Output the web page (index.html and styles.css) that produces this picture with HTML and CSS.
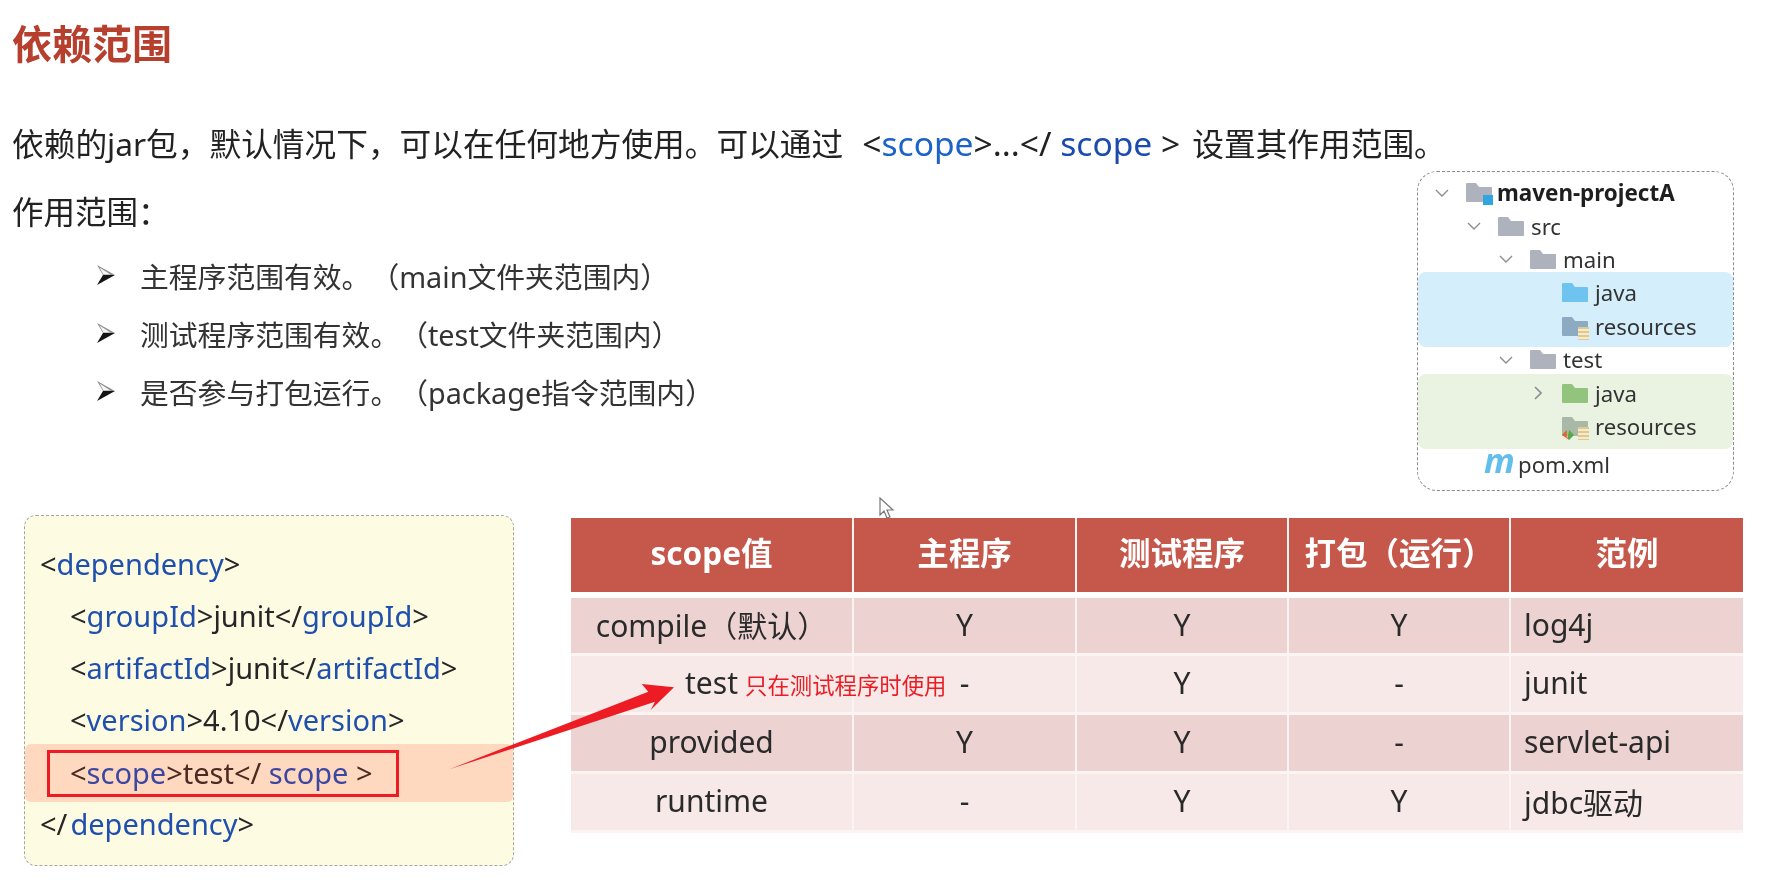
FILE: index.html
```html
<!DOCTYPE html>
<html lang="zh-CN">
<head>
<meta charset="utf-8">
<title>依赖范围</title>
<link rel="stylesheet" href="styles.css">
</head>
<body>
<svg class="defs" width="0" height="0" aria-hidden="true">
  <symbol id="folder" viewBox="0 0 26 19"><path d="M0 1a1 1 0 0 1 1-1h9l3 4h12a1 1 0 0 1 1 1v13a1 1 0 0 1-1 1H1a1 1 0 0 1-1-1z"/></symbol>
  <symbol id="chev-down" viewBox="0 0 14 8"><path d="M1 1l6 6 6-6" fill="none" stroke="#8a8d92" stroke-width="1.4"/></symbol>
  <symbol id="chev-right" viewBox="0 0 8 14"><path d="M1 1l6 6-6 6" fill="none" stroke="#8a8d92" stroke-width="1.6"/></symbol>
  <symbol id="bullet" viewBox="0 0 18 20"><path d="M0 0l18 10H6z" fill="#8f8f8f"/><path d="M2.500 2.500l11 7H6.500z" fill="#f6f6f6"/><path d="M0 20l18-10H6z" fill="#141414"/></symbol>
</svg>
<main class="slide">
  <h1 class="title">依赖范围</h1>
  <p class="intro">依赖的jar包，默认情况下，可以在任何地方使用。可以通过<span class="latin">&lt;<span class="kw">scope</span>&gt;...&lt;/ <span class="kw2">scope</span> &gt;</span>设置其作用范围。</p>

  <section class="top">
    <div class="scope-text">
      <p class="scope-label">作用范围：</p>
      <ul class="scope-list">
        <li><svg class="bullet"><use href="#bullet"/></svg><span>主程序范围有效。（main文件夹范围内）</span></li>
        <li><svg class="bullet"><use href="#bullet"/></svg><span>测试程序范围有效。（test文件夹范围内）</span></li>
        <li><svg class="bullet"><use href="#bullet"/></svg><span>是否参与打包运行。（package指令范围内）</span></li>
      </ul>
    </div>
    <div class="tree">
      <div class="row lv0"><svg class="chev"><use href="#chev-down"/></svg>
        <span class="icon-wrap"><svg class="folder f-gray"><use href="#folder"/></svg><i class="mod-badge"></i></span><b class="root-name">maven-projectA</b></div>
      <div class="row lv1"><svg class="chev"><use href="#chev-down"/></svg><svg class="folder f-gray"><use href="#folder"/></svg><span>src</span></div>
      <div class="row lv2"><svg class="chev"><use href="#chev-down"/></svg><svg class="folder f-gray"><use href="#folder"/></svg><span>main</span></div>
      <div class="band band-blue">
        <div class="row lv3"><span class="chev"></span><svg class="folder f-blue"><use href="#folder"/></svg><span>java</span></div>
        <div class="row lv3"><span class="chev"></span><span class="icon-wrap"><svg class="folder f-slate"><use href="#folder"/></svg><i class="res-badge"></i></span><span>resources</span></div>
      </div>
      <div class="row lv2"><svg class="chev"><use href="#chev-down"/></svg><svg class="folder f-gray"><use href="#folder"/></svg><span>test</span></div>
      <div class="band band-green">
        <div class="row lv3"><svg class="chev chev-r"><use href="#chev-right"/></svg><svg class="folder f-green"><use href="#folder"/></svg><span>java</span></div>
        <div class="row lv3"><span class="chev"></span><span class="icon-wrap"><svg class="folder f-sage"><use href="#folder"/></svg><i class="res-badge"></i><i class="code-badge"></i></span><span>resources</span></div>
      </div>
      <div class="row pom"><i class="pom-m">m</i><span>pom.xml</span></div>
    </div>
  </section>

  <section class="bottom">
    <div class="code">
      <div class="line">&lt;<span class="tag">dependency</span>&gt;</div>
      <div class="line ind">&lt;<span class="tag">groupId</span>&gt;junit&lt;/<span class="tag">groupId</span>&gt;</div>
      <div class="line ind">&lt;<span class="tag">artifactId</span>&gt;junit&lt;/<span class="tag">artifactId</span>&gt;</div>
      <div class="line ind">&lt;<span class="tag">version</span>&gt;4.10&lt;/<span class="tag">version</span>&gt;</div>
      <div class="hl"><div class="hl-box">&lt;<span class="hl-tag">scope</span>&gt;test&lt;/ <span class="hl-tag">scope</span> &gt;</div></div>
      <div class="line">&lt;/<span class="tag tag-close">dependency</span>&gt;</div>
    </div>

    <table class="scopes">
      <colgroup><col class="c1"><col class="c2"><col class="c3"><col class="c4"><col class="c5"></colgroup>
      <thead><tr><th>scope值</th><th>主程序</th><th>测试程序</th><th>打包（运行）</th><th>范例</th></tr></thead>
      <tbody>
        <tr><td>compile（默认）</td><td>Y</td><td>Y</td><td>Y</td><td class="ex">log4j</td></tr>
        <tr><td class="note-cell">test<span class="note">只在测试程序时使用</span></td><td>-</td><td>Y</td><td>-</td><td class="ex">junit</td></tr>
        <tr><td>provided</td><td>Y</td><td>Y</td><td>-</td><td class="ex">servlet-api</td></tr>
        <tr><td>runtime</td><td>-</td><td>Y</td><td>Y</td><td class="ex">jdbc驱动</td></tr>
      </tbody>
    </table>
  </section>

  <svg class="arrow" viewBox="0 0 240 100" aria-hidden="true"><polygon points="1.300,87.300 200.300,9.700 193.700,2 226,5.300 202.700,28 207,19.700"/></svg>
  <svg class="cursor" viewBox="0 0 16 24" aria-hidden="true"><path d="M1 1v17l4-4 3 7 3-1-3-7h6z" fill="#fff" stroke="#777" stroke-width="1.2"/></svg>
</main>
</body>
</html>
```
FILE: styles.css
```css
* { box-sizing: border-box; }
html, body { margin: 0; padding: 0; background: #fff; }
.defs { position: absolute; }
.slide {
  position: relative;
  width: 1767px;
  height: 880px;
  overflow: hidden;
  padding: 24px 33px 0 12px;
  background: #fff;
  color: #222;
  font-family: "Noto Sans", "Noto Sans CJK SC", sans-serif;
  text-spacing-trim: space-all;
  filter: blur(0.5px);
}
.title {
  margin: 0;
  font-size: 40px;
  line-height: 40px;
  font-weight: 700;
  color: #b73f2e;
}
.intro {
  margin: 55px 0 0;
  font-size: 31.7px;
  line-height: 48px;
  white-space: nowrap;
}
.latin { margin: 0 12px 0 19px; font-size: 33.6px; }
.kw { color: #1c62c8; }
.kw2 { color: #1c4bb0; }

.top { display: flex; justify-content: space-between; margin-top: 3px; }
.scope-text { padding-top: 17px; }
.scope-label { margin: 0; font-size: 31.5px; line-height: 48px; }
.scope-list {
  list-style: none;
  margin: 10px 0 0;
  padding: 0 0 0 85px;
  font-size: 28.8px;
  color: #333;
}
.scope-list li { display: flex; align-items: center; gap: 25px; height: 58px; white-space: nowrap; }
.bullet { width: 18px; height: 20px; flex: none; }

.tree {
  width: 317px;
  height: 320px;
  padding-top: 4px;
  border: 1.5px dashed #8c8c8c;
  border-radius: 20px;
  font-size: 22.2px;
  color: #333;
}
.row { display: flex; align-items: center; height: 33.4px; white-space: nowrap; }
.lv0 { padding-left: 17px; }
.lv1 { padding-left: 49px; }
.lv2 { padding-left: 81px; }
.lv3 { padding-left: 113px; }
.chev { width: 14px; height: 8px; flex: none; margin-right: 17px; }
.chev-r { width: 8px; height: 14px; margin-left: 3px; margin-right: 20px; }
.folder { width: 26px; height: 19px; flex: none; margin-right: 7px; }
.f-gray { fill: #adb2bd; }
.f-blue { fill: #6ec4ef; }
.f-slate { fill: #8cabc2; }
.f-green { fill: #93c47d; }
.f-sage { fill: #a9b9a8; }
.icon-wrap { position: relative; display: flex; flex: none; }
.root-name { font-weight: 700; color: #1e1e1e; margin-left: -2px; font-size: 22.4px; }
.mod-badge { position: absolute; left: 17px; top: 12px; width: 10px; height: 10px; background: #2fa6e0; }
.res-badge {
  position: absolute; left: 16px; top: 10px; width: 11px; height: 13px;
  background: repeating-linear-gradient(#e0c98c 0 2px, #f3ead0 2px 4px);
}
.code-badge {
  position: absolute; left: 0; top: 13px; width: 12px; height: 10px;
  background: linear-gradient(90deg, #e0662a 0 50%, #5aa84a 50% 100%);
  clip-path: polygon(0 50%, 40% 0, 40% 100%, 60% 0, 100% 50%, 60% 100%);
}
.band { margin-block: -4px; padding-block: 4px; border-radius: 8px; }
.band-blue { background: #d4eefc; }
.band-green {
  margin-block: -2px -6px;
  padding-block: 2px 6px;
  background: #eaf3e2;
}
.pom { margin-top: 5px; padding-left: 66px; }
.pom-m {
  width: 34px; font: italic 700 34px/1 "Noto Sans", sans-serif; color: #62bfec;
  margin-top: -10px;
}

.bottom { display: flex; align-items: flex-start; gap: 57px; margin: 24px -9px 0 0; padding-left: 12px; }
.code {
  flex: none;
  width: 490px;
  height: 351px;
  padding-top: 22px;
  border: 1.5px dashed #a5a5a5;
  border-radius: 12px;
  background: #fefbe3;
  font-size: 29px;
  line-height: 52px;
  color: #262626;
  white-space: nowrap;
}
.line { padding-left: 15px; }
.ind { padding-left: 45px; }
.tag { color: #1f50ad; }
.tag-close { margin-left: 3px; }
.hl {
  display: flex;
  align-items: center;
  height: 58px;
  margin-block: -2px -4px;
  padding-left: 22px;
  background: #fed9bf;
  border-radius: 6px;
  color: #4a2a22;
}
.hl-box {
  width: 352px;
  height: 47px;
  padding-left: 20px;
  border: 3px solid #ed1c24;
  line-height: 39px;
}
.hl-tag { color: #3c47a2; }

.scopes {
  flex: none;
  width: 1172px;
  margin-top: 3px;
  table-layout: fixed;
  border-collapse: collapse;
  font-size: 30px;
  color: #2a2a2a;
}
.c1 { width: 282px; }
.c2 { width: 223px; }
.c3 { width: 212px; }
.c4 { width: 222px; }
.c5 { width: 233px; }
.scopes th, .scopes td {
  padding: 0;
  text-align: center;
  border-left: 2px solid #fbf4f3;
  border-right: 2px solid #fbf4f3;
  white-space: nowrap;
}
.scopes th:first-child, .scopes td:first-child { border-left: 0; }
.scopes th:last-child, .scopes td:last-child { border-right: 0; }
.scopes th {
  height: 77px;
  padding-bottom: 8px;
  background: #c5584b;
  color: #fff;
  font-weight: 700;
  font-size: 31.5px;
  border-bottom: 6px solid #fff;
}
.scopes td { height: 59px; padding-bottom: 2px; border-bottom: 3px solid #fbf4f3; }
.scopes tbody tr:nth-child(odd) td { background: #ecd2d0; }
.scopes tbody tr:nth-child(even) td { background: #f6e9e8; }
.scopes td.ex { text-align: left; padding-left: 13px; }
.note-cell { position: relative; }
.note {
  position: absolute;
  left: 174px;
  top: 15px;
  font-size: 22.4px;
  line-height: 30px;
  color: #ed1c24;
}

.arrow { position: absolute; left: 448px; top: 682px; width: 240px; height: 100px; fill: #ed1c24; }
.cursor { position: absolute; left: 879px; top: 497px; width: 16px; height: 24px; }
```
